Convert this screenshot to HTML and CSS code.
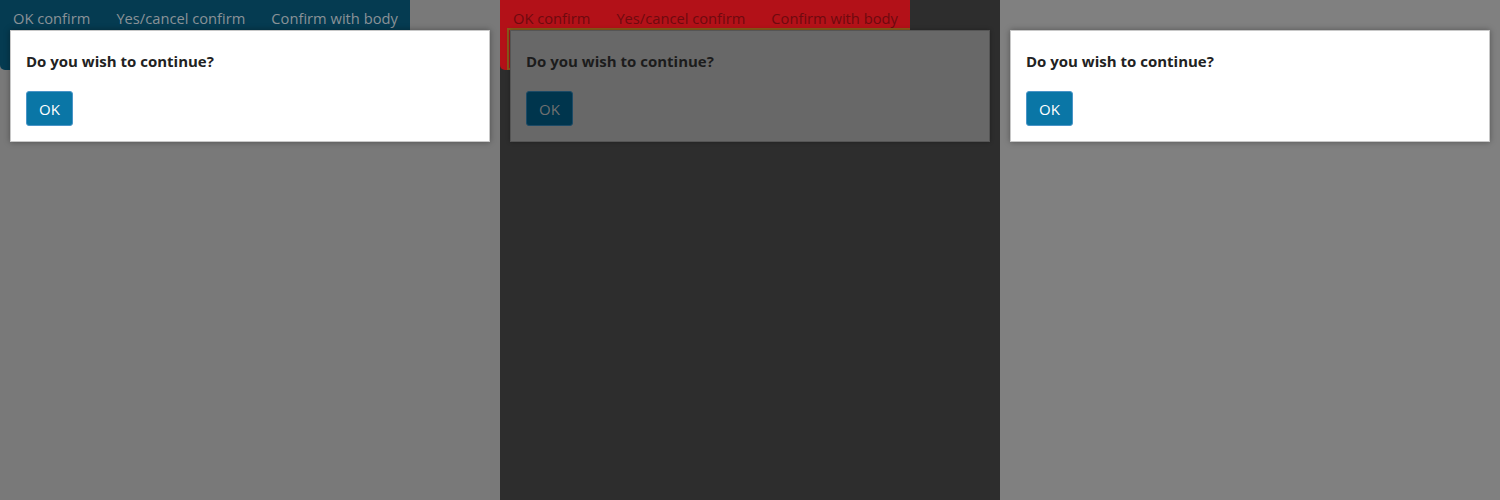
FILE: index.html
```html
<!DOCTYPE html>
<html>
<head>
<meta charset="utf-8">
<link rel="stylesheet" href="styles.css">
</head>
<body>
<div class="panels">
  <section class="panel panel-light">
    <div class="bar">
      <div class="bar-row">
        <span class="bar-btn">OK confirm</span>
        <span class="bar-btn">Yes/cancel confirm</span>
        <span class="bar-btn">Confirm with body</span>
      </div>
      <div class="bar-focus"></div>
    </div>
    <div class="overlay">
      <div class="dialog">
        <h2 class="dialog-title">Do you wish to continue?</h2>
        <button class="ok-btn">OK</button>
      </div>
    </div>
  </section>
  <section class="panel panel-dark">
    <div class="bar">
      <div class="bar-row">
        <span class="bar-btn">OK confirm</span>
        <span class="bar-btn">Yes/cancel confirm</span>
        <span class="bar-btn">Confirm with body</span>
      </div>
      <div class="bar-focus"></div>
    </div>
    <div class="overlay">
      <div class="dialog">
        <h2 class="dialog-title">Do you wish to continue?</h2>
        <button class="ok-btn">OK</button>
      </div>
    </div>
  </section>
  <section class="panel panel-plain">
    <div class="overlay">
      <div class="dialog">
        <h2 class="dialog-title">Do you wish to continue?</h2>
        <button class="ok-btn">OK</button>
      </div>
    </div>
  </section>
</div>
</body>
</html>
```
FILE: styles.css
```css
* { box-sizing: border-box; }
html, body { margin: 0; padding: 0; }
body { font-family: "Open Sans", "Noto Sans", sans-serif; }
.panels { display: flex; width: 1500px; height: 500px; }
.panel { position: relative; width: 500px; height: 500px; overflow: hidden; }

.panel-light { background: #797979; }
.panel-dark { background: #2d2d2d; }
.panel-plain { background: #808080; }

.bar {
  display: flex;
  flex-direction: column;
  width: 410px;
  height: 70px;
  padding-top: 7px;
  border-radius: 0 0 5px 5px;
  overflow: hidden;
}
.bar-row { display: flex; }
.bar-btn {
  font-size: 14.7px;
  line-height: 22px;
  padding: 0 13px;
  white-space: nowrap;
}
.bar-focus {
  margin: -1px 0 0 7px;
  height: 50px;
}
.panel-light .bar { background: #053b51; }
.panel-light .bar-btn { color: #8a9297; }
.panel-dark .bar { background: #b31118; }
.panel-dark .bar-btn { color: #6e0a0f; }
.panel-dark .bar-focus { border: 2px solid #8a5a1a; }

.overlay {
  position: absolute;
  inset: 0;
  padding: 30px 10px 0;
}
.dialog {
  width: 480px;
  height: 112px;
  padding: 19px 15px 0;
  background: #fff;
  border: 1px solid #c8c8c8;
  box-shadow: 0 0 6px rgba(0, 0, 0, 0.35);
}
.dialog-title {
  margin: 0 0 19px;
  font-size: 15px;
  line-height: 22px;
  font-weight: 700;
  color: #222;
}
.ok-btn {
  display: block;
  width: 47px;
  height: 35px;
  padding: 0;
  font-family: inherit;
  font-size: 15px;
  color: #fff;
  background: #0a76a6;
  border: 1px solid #4a95c8;
  border-radius: 3px;
}
.panel-dark .dialog {
  background: #686868;
  border-color: #555;
  box-shadow: 0 0 4px rgba(0, 0, 0, 0.3);
}
.panel-dark .dialog-title { color: #1c1c1c; }
.panel-dark .ok-btn {
  background: #00354d;
  color: #707070;
  border-color: #1c4a66;
}
```
